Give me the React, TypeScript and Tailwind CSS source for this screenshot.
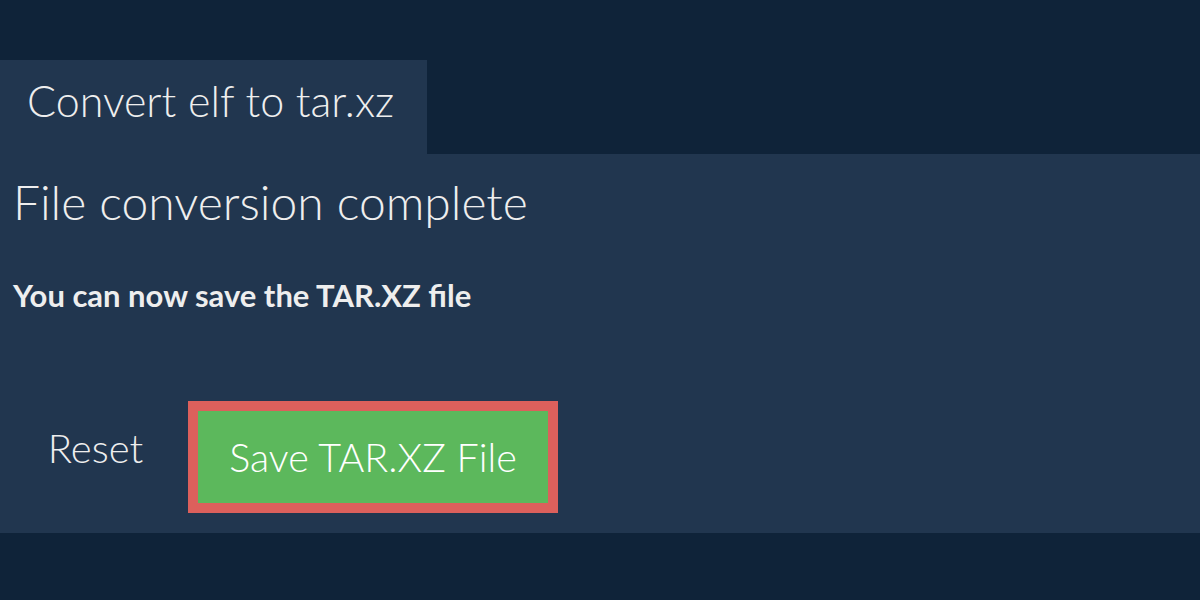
export default function App() {
  return (
    <div className="min-h-screen bg-[#0f2339] pt-[60px] font-['Lato','Open_Sans',sans-serif] text-[#eeeeee]">
      <div className="h-[94px] w-[427px] bg-[#21364f] pl-[27px] pt-[19px] text-[43px] font-light leading-none">
        Convert elf to tar.xz
      </div>
      <div className="h-[379px] bg-[#21364f] px-[13px] pt-[24px]">
        <h2 className="text-[48px] font-light leading-none">File conversion complete</h2>
        <p className="mt-[54px] text-[31px] font-bold leading-none">You can now save the TAR.XZ file</p>
        <div className="mt-[90px] flex items-start gap-[10px]">
          <button type="button" className="mt-[27px] w-[165px] text-center text-[40px] font-light leading-none">
            Reset
          </button>
          <button
            type="button"
            className="flex h-[112px] w-[370px] items-center justify-center border-[10px] border-[#dc605c] bg-[#5cb85c] text-[39.5px] font-light text-white"
          >
            Save TAR.XZ File
          </button>
        </div>
      </div>
    </div>
  );
}
